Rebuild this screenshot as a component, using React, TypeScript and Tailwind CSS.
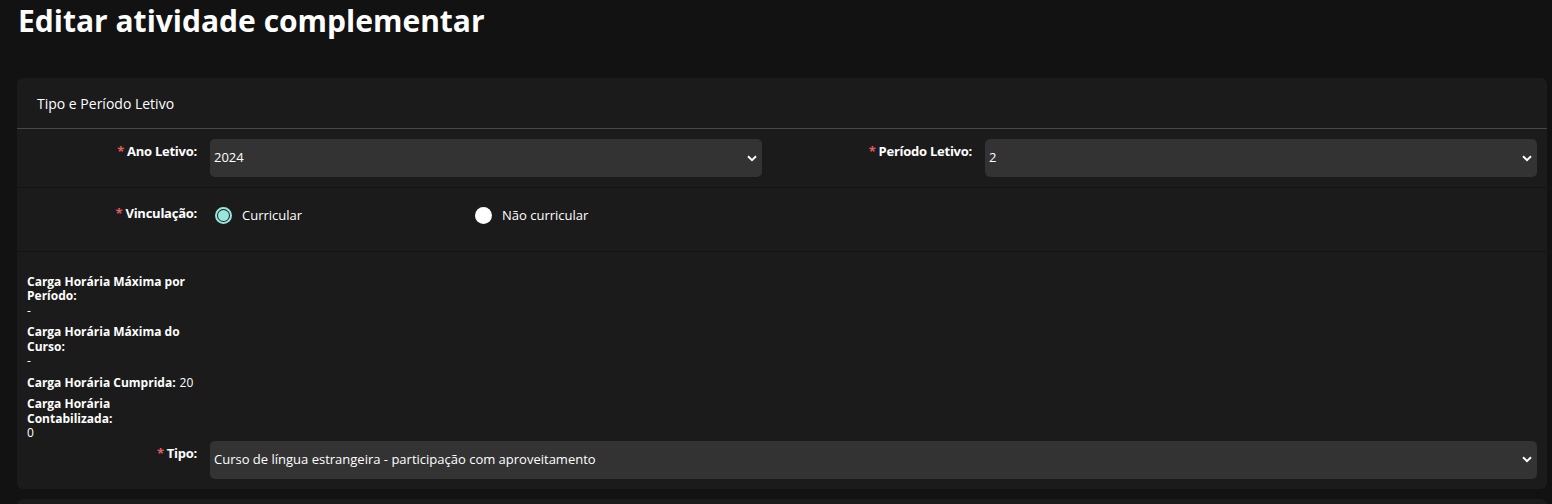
import React from 'react'

const font = { fontFamily: '"Open Sans", "Liberation Sans", sans-serif' }

function Chevron() {
  return (
    <svg width="10" height="7" viewBox="0 0 10 7" className="shrink-0">
      <path d="M1 1.2 L5 5.2 L9 1.2" fill="none" stroke="#fff" strokeWidth="2" />
    </svg>
  )
}

function Label({ text, width }: { text: string; width: string }) {
  return (
    <div className={`${width} shrink-0 pt-[3px] pr-[13px] text-right text-[13px] font-bold tracking-[-0.25px] text-white leading-[18px]`}>
      <span className="text-[#e35d5d] mr-[3px]">*</span>
      {text}
    </div>
  )
}

function Select({ value }: { value: string }) {
  return (
    <div className="flex-1 h-[38px] rounded-[5px] bg-[#333333] flex items-center justify-between pl-[4px] pr-[5px] text-[13px] text-white">
      <span>{value}</span>
      <Chevron />
    </div>
  )
}

function Radio({ checked, label }: { checked?: boolean; label: string }) {
  return (
    <div className="flex items-center gap-[10px] w-[260px] text-[13px] text-white">
      {checked ? (
        <span className="w-[17px] h-[17px] rounded-full border-[2px] border-[#9be6dc] bg-[#1b1b1b] flex items-center justify-center">
          <span className="w-[11px] h-[11px] rounded-full bg-[#9be6dc]" />
        </span>
      ) : (
        <span className="w-[17px] h-[17px] rounded-full bg-white" />
      )}
      <span>{label}</span>
    </div>
  )
}

function Info({ label, value }: { label: string; value: string }) {
  return (
    <div className="w-[170px] flex flex-wrap gap-x-[4px] text-[12px] leading-[14.5px] text-white mb-[7px]">
      <span className="font-bold">{label}</span>
      <span>{value}</span>
    </div>
  )
}

export default function App() {
  return (
    <div className="min-h-[504px] bg-[#121212] overflow-hidden" style={font}>
      <h1 className="px-[18px] pt-[1px] text-[30px] leading-[40px] font-bold text-white">
        Editar atividade complementar
      </h1>

      <div className="mt-[37px] ml-[17px] mr-[5px] rounded-[6px] bg-[#1b1b1b]">
        <div className="h-[51px] flex items-center px-[20px] pt-[1px] text-[14px] text-white border-b border-[#474747]">
          Tipo e Período Letivo
        </div>

        <div className="flex border-b border-[#141414] py-[10px]">
          <div className="flex w-[758px] pl-[10px] pr-[13px]">
            <Label text="Ano Letivo:" width="w-[183px]" />
            <Select value="2024" />
          </div>
          <div className="flex flex-1 pl-[10px] pr-[10px]">
            <Label text="Período Letivo:" width="w-[200px]" />
            <Select value="2" />
          </div>
        </div>

        <div className="flex border-b border-[#141414] pt-[13px] pb-[25px] pl-[10px]">
          <Label text="Vinculação:" width="w-[183px]" />
          <div className="flex pt-[5px] pl-[5px]">
            <Radio checked label="Curricular" />
            <Radio label="Não curricular" />
          </div>
        </div>

        <div className="pl-[10px] pt-[23px]">
          <Info label="Carga Horária Máxima por Período:" value="-" />
          <Info label="Carga Horária Máxima do Curso:" value="-" />
          <Info label="Carga Horária Cumprida:" value="20" />
          <Info label="Carga Horária Contabilizada:" value="0" />
        </div>

        <div className="flex pl-[10px] pr-[10px] pb-[10px] -mt-[7px]">
          <Label text="Tipo:" width="w-[183px]" />
          <Select value="Curso de língua estrangeira - participação com aproveitamento" />
        </div>
      </div>

      <div className="mt-[10px] ml-[17px] mr-[5px] h-[20px] rounded-[6px] bg-[#1b1b1b]" />
    </div>
  )
}
